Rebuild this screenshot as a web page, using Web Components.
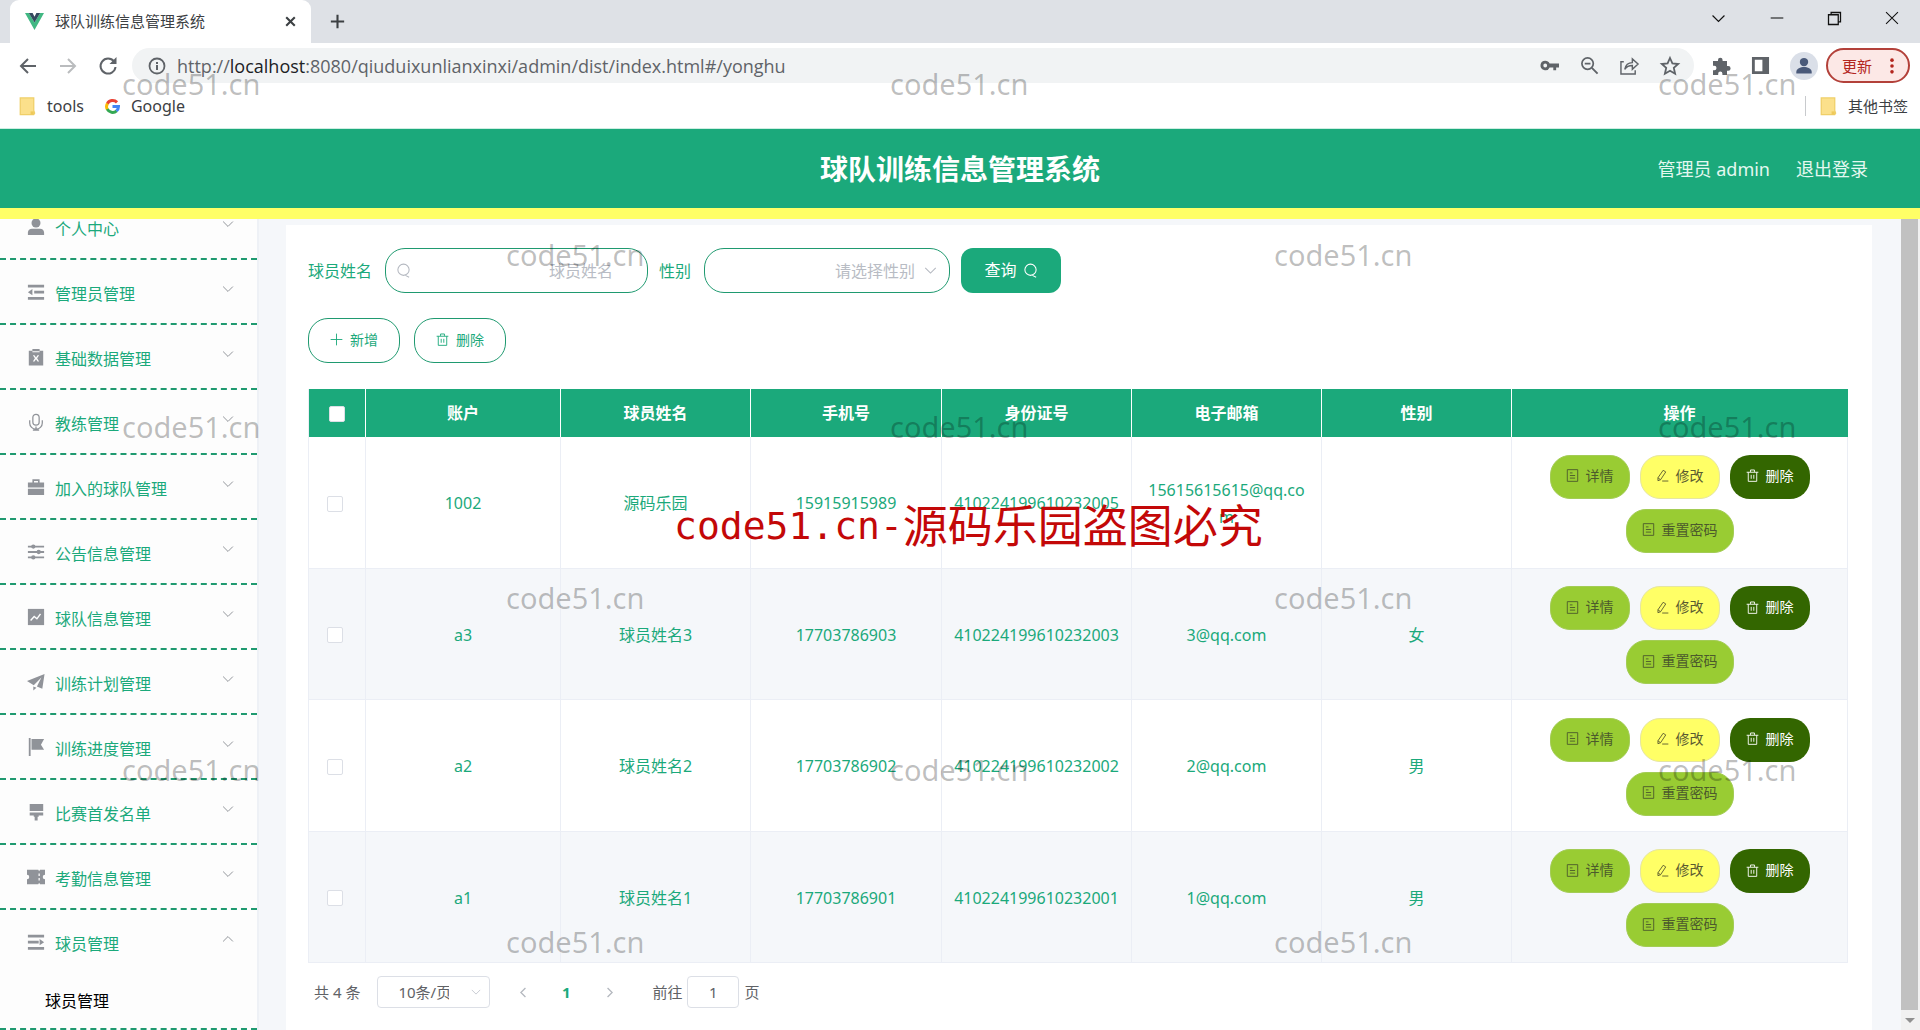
<!DOCTYPE html>
<html lang="zh-CN">
<head>
<meta charset="utf-8">
<title>球队训练信息管理系统</title>
<style>
html, body { height: 100%; }
body { margin: 0; display: flex; flex-direction: column; overflow: hidden; position: relative;
  font-family: "Noto Sans", "Noto Sans CJK SC", sans-serif; font-size: 16px; line-height: 24px; color: #1ba97b; background: #fff; }
admin-app { flex: 1; min-height: 0; }
</style>
</head>
<body>
<browser-bar></browser-bar>
<admin-app></admin-app>
<water-mark></water-mark>
<script>
const ICONS = {
  vue: '<path fill="#41b883" d="M0 1h4l6 10 6-10h4L10 19z"/><path fill="#34495e" d="M4 1h4l2 4 2-4h4l-6 10z"/>',
  close: '<path class="s" stroke-width="2.2" d="M5.500 5.500l9 9m0-9l-9 9"/>',
  plusBold: '<path class="s" stroke-width="2.2" d="M10 3v14M3 10h14"/>',
  back: '<path class="s" stroke-width="2" d="M18 10H3m7-7l-7 7 7 7"/>',
  forward: '<path class="s" stroke-width="2" d="M2 10h15m-7-7l7 7-7 7"/>',
  reload: '<path class="s" stroke-width="2" d="M16 5.500A7.500 7.500 0 1 0 17.500 11"/><path d="M18.500 1v7h-7z"/>',
  info: '<circle class="s" stroke-width="1.800" cx="10" cy="10" r="7.500"/><path d="M9 9h2v5H9zM9 6h2v2H9z"/>',
  key: '<path fill-rule="evenodd" d="M5.500 5a5 5 0 1 0 4.600 7H14v3h3v-3h3V8h-9.900A5 5 0 0 0 5.500 5zm0 3a2 2 0 1 1 0 4 2 2 0 0 1 0-4z"/>',
  zoomOut: '<circle class="s" stroke-width="1.800" cx="8" cy="8" r="6"/><path class="s" stroke-width="2" d="M12.500 12.500l6 6M5 8h6"/>',
  share: '<path class="s" stroke-width="1.500" d="M4 6H1v13h15v-4M5 14c1-5 4-7 8-7V3l6 5.500-6 5.500v-4c-4 0-6 1-8 4z"/>',
  star: '<path class="s" stroke-width="1.800" d="M10 2l2.400 5.400 5.800.6-4.400 3.900 1.300 5.800L10 14.700l-5.100 3 1.300-5.800L1.800 8l5.800-.6z"/>',
  puzzle: '<path d="M2 5h5V4a2.300 2.300 0 0 1 4.600 0v1H16v5h1.200a2.400 2.400 0 0 1 0 4.800H16V19h-4.600v-1.500a2.100 2.100 0 0 0-4.200 0V19H2v-4.800h1.300a2.200 2.200 0 0 0 0-4.400H2z"/>',
  panel: '<path fill-rule="evenodd" d="M1 1h18v18H1zM4 4v12h8V4z"/>',
  avatar: '<circle fill="#dadfe8" cx="10" cy="10" r="10"/><circle cx="10" cy="7.200" r="3"/><path d="M4.500 15.300v-1c0-2.400 3-3.600 5.500-3.600s5.500 1.200 5.500 3.600v1z"/>',
  dots: '<circle cx="10" cy="3.500" r="2"/><circle cx="10" cy="10" r="2"/><circle cx="10" cy="16.500" r="2"/>',
  folder: '<path fill="#fbe08b" stroke="#f0cf68" d="M2.500 1h15v14l1 3-1 1.500h-15z"/><path fill="#eec95a" d="M14 16h3.500v3.500H14z"/>',
  google: '<path fill="none" stroke="#ea4335" stroke-width="4" d="M16 4.500A8 8 0 0 0 3 6.500"/><path fill="none" stroke="#fbbc05" stroke-width="4" d="M3.200 6a8 8 0 0 0 0 8"/><path fill="none" stroke="#34a853" stroke-width="4" d="M3 13.500a8 8 0 0 0 12.500 2.300"/><path fill="none" stroke="#4285f4" stroke-width="4" d="M10 10h8a8 8 0 0 1-2.700 6"/>',
  down: '<path class="s" d="M3 6.500l7 7 7-7"/>',
  up: '<path class="s" d="M3 13.500l7-7 7 7"/>',
  left: '<path class="s" stroke-width="2" d="M13 3l-7 7 7 7"/>',
  right: '<path class="s" stroke-width="2" d="M7 3l7 7-7 7"/>',
  min: '<path class="s" stroke-width="1.500" d="M1 10h18"/>',
  restore: '<path class="s" stroke-width="1.700" d="M2 5h13v13H2zM5.500 5V2H18v12.500h-3"/>',
  winClose: '<path class="s" stroke-width="1.500" d="M1.500 1.500l17 17m0-17l-17 17"/>',
  search: '<circle class="s" cx="10" cy="9" r="7.500"/><path class="s" d="M12.500 16.500l5 2.500"/>',
  plus: '<path class="s" d="M10 1v18M1 10h18"/>',
  trash: '<path class="s" d="M1 5h18M7 4.500V1.500h6v3M3.500 5v14h13V5M8 9v6m4-6v6"/>',
  doc: '<path class="s" d="M2 1h16v18H2zM6 6h4m-4 4h8m-8 4h8"/>',
  edit: '<path class="s" d="M3 13.500L11 2l4 2.500-8 12L3 18zM3 13.500l4 3M9.500 18.500H19"/>',
  user: '<circle cx="10" cy="5.500" r="5"/><path d="M1 19v-2.500c0-3 2-4.500 4.500-4.500h9c2.500 0 4.500 1.500 4.500 4.500V19z"/>',
  fold: '<path d="M1 2h18v3H1zM8 8.700h11v3H8zM1 15.500h18v3H1zM6 6.800v6.700L1 10.200z"/>',
  unfold: '<path d="M1 2h18v3H1zM1 8.700h12v3H1zM1 15.500h18v3H1zM14 6.800v6.700l5-3.300z"/>',
  clip: '<path fill-rule="evenodd" d="M2 3h4V1h8v2h4v16.500H2zM6 3.500v1.300h8V3.500zM6.500 8l2.300 3.500L6.500 15h1.800l1.700-2.600 1.700 2.600h1.800l-2.300-3.500L13.500 8h-1.800L10 10.600 8.300 8z"/>',
  mic: '<path class="s" d="M6.500 5a3.500 3.500 0 0 1 7 0v5a3.500 3.500 0 0 1-7 0zM3 8v3a7 7 0 0 0 14 0V8M10 18v-3M6.500 19h7"/>',
  bag: '<path fill-rule="evenodd" d="M1 5h5V1.500h8V5h5v5.500H1zM7.800 3.200V5h4.400V3.200zM1 12h18v7H1z"/>',
  sliders: '<path class="s" stroke-width="2" d="M1 4h18M1 10h18M1 16h18"/><circle cx="7" cy="4" r="2.400"/><circle cx="13" cy="10" r="2.400"/><circle cx="7" cy="16" r="2.400"/>',
  chart: '<path d="M1 1h18v18H1z"/><path fill="none" stroke="#fff" stroke-width="1.600" d="M4 14l4-4.500 3 2.500 4-5.500"/>',
  plane: '<path d="M0 9L19.500 1 17 17.500l-6-2.500L16 5 7.500 13.500zM7 15l3.500 1.500L7 19.500z"/>',
  flag: '<path d="M2 0h2v20H2zM5 1h14l-3.500 6.500L19 13H5z"/>',
  brush: '<path d="M3 1h15v8H3zM3 10.500h15v3.500h-5v1.200h-1.200V19.500H8.500v-4.300H7.500V14H3z"/>',
  ticket: '<path d="M0 2h12.500l1 1.500 1-1.500H20v5.500a2.500 2.500 0 0 0 0 5V18h-5.500l-1-1.500-1 1.500H0v-5.500a2.500 2.500 0 0 0 0-5zM12.800 6v3h1.400V6zm0 5v3h1.400v-3z" fill-rule="evenodd"/>'
};

class UiElement extends HTMLElement {
  constructor() {
    super();
    this.attachShadow({ mode: 'open' });
  }
  connectedCallback() {
    this.shadowRoot.innerHTML = `<style>*{box-sizing:border-box}${this.css()}</style>${this.html()}`;
  }
  css() { return ''; }
  html() { return '<slot></slot>'; }
}

/* <ui-icon name size> */
customElements.define('ui-icon', class extends UiElement {
  css() {
    const s = this.getAttribute('size') || 16;
    return `:host{display:inline-flex;flex:none;width:${s}px;height:${s}px}
      svg{width:100%;height:100%;fill:currentColor;stroke-width:1.4;overflow:visible}
      .s{fill:none;stroke:currentColor}`;
  }
  html() { return `<svg viewBox="0 0 20 20" aria-hidden="true">${ICONS[this.getAttribute('name')]}</svg>`; }
});

customElements.define('browser-bar', class extends UiElement {
  css() { return `
    :host{display:block;color:#5f6368;border-bottom:1px solid #cdeee2}
    button{all:unset;display:inline-flex;align-items:center;justify-content:center;box-sizing:border-box}
    .row,.grp,.tab{display:flex;align-items:center}
    .tabs{height:43px;background:#dee1e6;padding:0 21px 0 10px;justify-content:space-between;color:#111}
    .tab{width:301px;height:43px;background:#fff;border-radius:9px 9px 0 0;padding:0 11px 1px 15px;gap:11px;font-size:15px;color:#3c4043}
    .tab span{flex:1}
    .new{margin:0 0 1px 17px;color:#3c4043}
    .win{gap:43px;padding-bottom:7px}
    .tool{height:45px;padding:0 10px 0 18px}
    .nav{gap:20px}
    .omni{flex:1;height:35px;margin-left:3px;border-radius:18px;background:#f1f3f4;display:flex;align-items:center;padding:0 14px 0 15px;gap:10px}
    .url{flex:1;font-size:18px;white-space:nowrap;font-family:"Open Sans","Noto Sans CJK SC",sans-serif}
    .url b{font-weight:400;color:#202124}
    .acts{gap:21px}
    .ext{gap:20px;padding:0 8px 0 17px}
    .avatar{color:#4a5a7a;display:inline-flex}
    .upd{height:35px;width:84px;border:2px solid #b3413a;border-radius:18px;background:#fce8e6;color:#b3261e;font-size:15px;justify-content:space-between;padding:0 7px 0 14px}
    .marks{height:40px;padding:0 12px 4px 18px;justify-content:space-between;color:#3c4043}
    a{color:inherit;text-decoration:none;display:inline-flex;align-items:center;gap:11px}
    .grp.l{gap:21px}
    .other{border-left:1px solid #c8cacd;padding-left:13px;height:20px;font-size:15px}
  `; }
  html() { return `
    <div class="row tabs">
      <div class="grp"><div class="tab"><ui-icon name="vue" size="19"></ui-icon><span>球队训练信息管理系统</span><button aria-label="关闭标签"><ui-icon name="close" size="19"></ui-icon></button></div>
      <button class="new" aria-label="新标签页"><ui-icon name="plusBold" size="19"></ui-icon></button></div>
      <div class="grp win"><button aria-label="标签列表"><ui-icon name="down" size="17"></ui-icon></button><button aria-label="最小化"><ui-icon name="min" size="14"></ui-icon></button><button aria-label="还原"><ui-icon name="restore" size="15"></ui-icon></button><button aria-label="关闭"><ui-icon name="winClose" size="14"></ui-icon></button></div>
    </div>
    <div class="row tool">
      <div class="grp nav"><button aria-label="后退"><ui-icon name="back" size="20"></ui-icon></button><button aria-label="前进" style="color:#babcbe"><ui-icon name="forward" size="20"></ui-icon></button><button aria-label="刷新"><ui-icon name="reload" size="20"></ui-icon></button></div>
      <span style="width:11px"></span>
      <div class="omni"><ui-icon name="info" size="20"></ui-icon><div class="url" role="textbox" aria-label="地址栏">http://<b>localhost</b>:8080/qiuduixunlianxinxi/admin/dist/index.html#/yonghu</div>
        <div class="grp acts"><ui-icon name="key" size="19"></ui-icon><ui-icon name="zoomOut" size="19"></ui-icon><ui-icon name="share" size="19"></ui-icon><ui-icon name="star" size="20"></ui-icon></div></div>
      <div class="grp ext"><ui-icon name="puzzle" size="20"></ui-icon><ui-icon name="panel" size="19"></ui-icon><span class="avatar"><ui-icon name="avatar" size="28"></ui-icon></span></div>
      <button class="upd">更新<ui-icon name="dots" size="18"></ui-icon></button>
    </div>
    <div class="row marks">
      <div class="grp l"><a href="#tools"><ui-icon name="folder" size="18"></ui-icon>tools</a><a href="#google"><ui-icon name="google" size="15"></ui-icon>Google</a></div>
      <a class="other" href="#other"><ui-icon name="folder" size="18"></ui-icon>其他书签</a>
    </div>`; }
});

customElements.define('app-header', class extends UiElement {
  css() { return `
    :host{display:grid;grid-template-columns:1fr auto 1fr;align-items:center;height:90px;padding:0 52px;background:#1ba97b;border-bottom:11px solid #ffff66;color:#e4f8f0;box-sizing:border-box;font-size:18px}
    h1{grid-column:2;margin:0;font-size:28px;line-height:40px;font-weight:700;color:#fff}
    div{justify-self:end;display:flex;gap:26px}
    a{color:inherit;text-decoration:none}`; }
  html() { return `<h1>球队训练信息管理系统</h1><div><span>管理员 admin</span><a href="#logout">退出登录</a></div>`; }
});

customElements.define('nav-item', class extends UiElement {
  css() { return `
    :host{display:block;flex:none;border-bottom:2px dashed #1f9a70}
    button{all:unset;box-sizing:border-box;width:100%;height:63px;display:flex;align-items:center;padding:0 22px 0 27px;gap:10px}
    .t{flex:1;padding-top:5px}
    .i{color:#909399;display:flex}
    .c{color:#909399;display:flex;padding-bottom:5px}
    ::slotted(a){display:block;padding:16px 0 15px 45px;color:#000;text-decoration:none}`; }
  html() {
    const open = this.hasAttribute('open');
    return `<button aria-expanded="${open}"><span class="i"><ui-icon name="${this.getAttribute('icon')}" size="18"></ui-icon></span><span class="t">${this.getAttribute('label')}</span><span class="c"><ui-icon name="${open ? 'up' : 'down'}" size="14"></ui-icon></span></button><slot></slot>`;
  }
});

customElements.define('side-nav', class extends UiElement {
  css() { return `:host{display:flex;flex-direction:column;justify-content:flex-end;flex:0 0 259px;overflow:hidden;background:#fdfdfd;border-right:2px solid #eef1f6;box-sizing:border-box}`; }
  html() {
    return [['user', '个人中心'], ['fold', '管理员管理'], ['clip', '基础数据管理'], ['mic', '教练管理'], ['bag', '加入的球队管理'], ['sliders', '公告信息管理'],
      ['chart', '球队信息管理'], ['plane', '训练计划管理'], ['flag', '训练进度管理'], ['brush', '比赛首发名单'], ['ticket', '考勤信息管理']]
      .map(([i, l]) => `<nav-item icon="${i}" label="${l}"></nav-item>`).join('') +
      `<nav-item icon="unfold" label="球员管理" open><a href="#/yonghu">球员管理</a></nav-item>`;
  }
});

customElements.define('search-form', class extends UiElement {
  css() { return `
    :host{display:block}
    form{display:flex;align-items:center}
    .field{position:relative;display:flex;align-items:center;color:#b4b8c0;margin:0 11px 0 13px}
    .field ui-icon{position:absolute;pointer-events:none}
    .lead{left:11px}.tail{right:12px}
    input,select{appearance:none;width:263px;height:45px;border:1px solid #1f9a70;border-radius:20px;background:#fff;padding:0 34px;font:inherit;color:#b8bcc4;text-align:right;outline:0}
    select{width:246px;text-align-last:right}
    input::placeholder{color:#b8bcc4}
    button{all:unset;box-sizing:border-box;height:45px;width:100px;border-radius:12px;background:#1ba97b;color:#fff;display:flex;align-items:center;justify-content:center;padding-bottom:1px;gap:6px}`; }
  html() { return `<form>
    <label for="name">球员姓名</label>
    <span class="field"><ui-icon class="lead" name="search" size="15"></ui-icon><input id="name" placeholder="球员姓名"></span>
    <label for="sex">性别</label>
    <span class="field"><select id="sex"><option>请选择性别</option><option>男</option><option>女</option></select><ui-icon class="tail" name="down" size="15"></ui-icon></span>
    <button type="button">查询<ui-icon name="search" size="15"></ui-icon></button></form>`; }
});

/* <pill-button icon kind> : kind is outline, lime, yellow or dark */
customElements.define('pill-button', class extends UiElement {
  css() { return `
    :host{display:inline-flex;font-size:14px}
    button{all:unset;box-sizing:border-box;height:44px;padding:0 15px 2px;border:1px solid #0000;border-radius:20px;display:flex;align-items:center;gap:7px;white-space:nowrap;line-height:20px}
    :host([kind=outline]) button{height:45px;padding:0 21px 2px;border-color:#1f9a70}
    :host([kind=lime]) button{background:#99cc33;color:#4c5a2c;border-color:#a3cc55}
    :host([kind=yellow]) button{background:#ffff66;color:#5a5a30;border-color:#e6e6a0}
    :host([kind=dark]) button{background:#336600;color:#fff}`; }
  html() { return `<button type="button"><ui-icon name="${this.getAttribute('icon')}" size="13"></ui-icon><slot></slot></button>`; }
});

customElements.define('player-table', class extends UiElement {
  css() { return `
    :host{display:block}
    table{width:100%;table-layout:fixed;border-collapse:separate;border-spacing:0;border-left:1px solid #ebeef5}
    th,td{padding:0 12px;text-align:center;border-right:1px solid #ebeef5;overflow-wrap:anywhere;line-height:27px}
    th{height:48px;background:#1ba97b;color:#fff;border-color:#fff;font-weight:700}
    td{height:132px;padding-top:2px;border-bottom:1px solid #ebeef5}
    th:last-child{border-color:#1ba97b}
    td:nth-child(5),td:nth-child(6){padding:2px 10px 0}
    tr:nth-child(even) td{height:131px;background:#f5f7fa}
    td:first-child,th:first-child{padding:0}
    input{appearance:none;display:block;width:16px;height:16px;margin:2px auto 0;border:1px solid #dcdfe6;border-radius:2px;background:#fff}
    td input{margin-left:18px}
    .ops{display:flex;flex-wrap:wrap;justify-content:center;gap:10px}`; }
  html() {
    const rows = [['1002', '源码乐园', '15915915989', '410224199610232005', '15615615615@qq.com', ''], ['a3', '球员姓名3', '17703786903', '410224199610232003', '3@qq.com', '女'],
      ['a2', '球员姓名2', '17703786902', '410224199610232002', '2@qq.com', '男'], ['a1', '球员姓名1', '17703786901', '410224199610232001', '1@qq.com', '男']];
    const ops = `<div class="ops"><pill-button icon="doc" kind="lime">详情</pill-button><pill-button icon="edit" kind="yellow">修改</pill-button><pill-button icon="trash" kind="dark">删除</pill-button><pill-button icon="doc" kind="lime">重置密码</pill-button></div>`;
    return `<table><colgroup>${[57, 195, 190, 191, 190, 190, 190, 336].map(w => `<col style="width:${w}px">`).join('')}</colgroup>
      <thead><tr><th><input type="checkbox" aria-label="全选"></th>${['账户', '球员姓名', '手机号', '身份证号', '电子邮箱', '性别', '操作'].map(t => `<th>${t}</th>`).join('')}</tr></thead>
      <tbody>${rows.map(r => `<tr><td><input type="checkbox" aria-label="选择 ${r[0]}"></td>${r.map(c => `<td>${c}</td>`).join('')}<td>${ops}</td></tr>`).join('')}</tbody></table>`;
  }
});

customElements.define('page-nav', class extends UiElement {
  css() { return `
    :host{display:flex;align-items:center;padding:13px 6px;font-size:15px;color:#606266}
    .size{position:relative;display:flex;align-items:center;margin:0 25px 0 17px;color:#c0c4cc}
    .size ui-icon{position:absolute;right:8px;pointer-events:none}
    select,input{appearance:none;height:32px;border:1px solid #dcdfe6;border-radius:4px;background:#fff;font:inherit;color:#606266;outline:0}
    select{width:113px;padding:0 40px 0 20px;text-align-last:center}
    button{all:unset;width:16px;height:28px;display:flex;align-items:center;justify-content:center;color:#b4b8bf}
    .pages{display:flex;align-items:center;gap:27px;margin-right:35px}
    .cur{color:#1ba97b;font-weight:700}
    label{display:flex;align-items:center;gap:5px}
    input{width:52px;padding:0;text-align:center}`; }
  html() { return `<span>共 4 条</span>
    <span class="size"><select aria-label="每页条数"><option>10条/页</option><option>20条/页</option></select><ui-icon name="down" size="12"></ui-icon></span>
    <span class="pages"><button aria-label="上一页"><ui-icon name="left" size="13"></ui-icon></button><button class="cur">1</button><button aria-label="下一页"><ui-icon name="right" size="13"></ui-icon></button></span>
    <label>前往<input value="1">页</label>`; }
});

customElements.define('admin-app', class extends UiElement {
  css() { return `
    :host{display:flex;flex-direction:column}
    .body{flex:1;min-height:0;display:flex}
    main{flex:1;min-width:0;background:#f5f7fa;padding:6px 29px 0 27px;display:flex}
    section{flex:1;min-width:0;background:#fff;padding:23px 24px 0 22px;overflow:hidden}
    .acts{display:flex;gap:14px;margin:25px 0 26px}
    .bar{flex:0 0 19px;display:flex;flex-direction:column;background:#f1f1f1;padding-right:2px}
    .thumb{flex:1;background:#c1c1c1}
    .arrow{height:20px;display:flex;align-items:center;justify-content:center}
    .arrow::before{content:"";border:5px solid #0000;border-top-color:#909090;border-bottom:0}`; }
  html() { return `<app-header></app-header><div class="body"><side-nav></side-nav>
    <main><section><search-form></search-form>
      <div class="acts"><pill-button icon="plus" kind="outline">新增</pill-button><pill-button icon="trash" kind="outline">删除</pill-button></div>
      <player-table></player-table><page-nav></page-nav></section></main>
    <div class="bar"><div class="thumb"></div><div class="arrow"></div></div></div>`; }
});

/* Tiled overlay: three columns on odd rows, two in between on even rows */
customElements.define('water-mark', class extends UiElement {
  css() { return `
    :host{position:absolute;inset:0;overflow:hidden;pointer-events:none;color:rgba(0,0,0,.26);font-size:29px;line-height:40px}
    span{position:absolute}
    p{position:absolute;left:674px;top:500px;margin:0;display:flex;align-items:center;font-size:45px;line-height:52px;color:#c30808;white-space:nowrap}
    i{font:normal 38px/52px "DejaVu Sans Mono","Liberation Mono",monospace}`; }
  html() {
    let out = '';
    for (let r = 0; r < 6; r++)
      for (let c = 0; c < 3 - r % 2; c++)
        out += `<span style="left:${122 + (r % 2) * 384 + c * 768}px;top:${64 + Math.floor(r * 171.6)}px">code51.cn</span>`;
    return out + '<p><i>code51.cn-</i>源码乐园盗图必究</p>';
  }
});
</script>
</body>
</html>
